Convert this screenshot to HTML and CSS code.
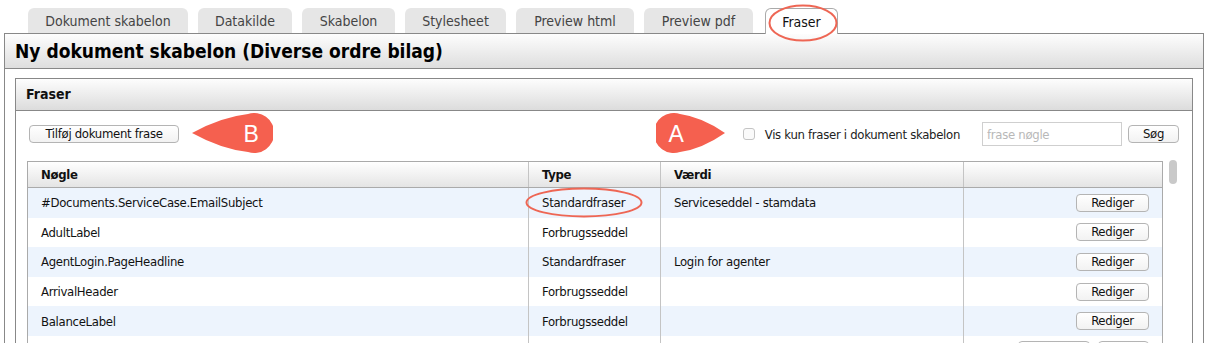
FILE: index.html
```html
<!DOCTYPE html>
<html lang="da">
<head>
<meta charset="utf-8">
<title>Fraser</title>
<link rel="stylesheet" href="styles.css">
</head>
<body>
<div class="page">
  <div class="tabs">
    <div class="tab">Dokument skabelon</div>
    <div class="tab">Datakilde</div>
    <div class="tab">Skabelon</div>
    <div class="tab">Stylesheet</div>
    <div class="tab">Preview html</div>
    <div class="tab">Preview pdf</div>
    <div class="tab active">Fraser</div>
  </div>
  <div class="panel">
    <div class="panel-head">Ny dokument skabelon (Diverse ordre bilag)</div>
    <div class="inner">
      <div class="inner-head">Fraser</div>
      <div class="toolbar">
        <button class="btn add">Tilføj dokument frase</button>
        <div class="spacer"></div>
        <label class="check"><span class="box"></span>Vis kun fraser i dokument skabelon</label>
        <input class="search" type="text" placeholder="frase nøgle">
        <button class="btn sog">Søg</button>
      </div>
      <div class="grid-wrap">
        <div class="table">
          <div class="row head">
            <div class="cell">Nøgle</div>
            <div class="cell">Type</div>
            <div class="cell">Værdi</div>
            <div class="cell"></div>
          </div>
          <div class="row alt">
            <div class="cell">#Documents.ServiceCase.EmailSubject</div>
            <div class="cell">Standardfraser</div>
            <div class="cell">Serviceseddel - stamdata</div>
            <div class="cell act"><button class="btn edit">Rediger</button></div>
          </div>
          <div class="row">
            <div class="cell">AdultLabel</div>
            <div class="cell">Forbrugsseddel</div>
            <div class="cell"></div>
            <div class="cell act"><button class="btn edit">Rediger</button></div>
          </div>
          <div class="row alt">
            <div class="cell">AgentLogin.PageHeadline</div>
            <div class="cell">Standardfraser</div>
            <div class="cell">Login for agenter</div>
            <div class="cell act"><button class="btn edit">Rediger</button></div>
          </div>
          <div class="row">
            <div class="cell">ArrivalHeader</div>
            <div class="cell">Forbrugsseddel</div>
            <div class="cell"></div>
            <div class="cell act"><button class="btn edit">Rediger</button></div>
          </div>
          <div class="row alt">
            <div class="cell">BalanceLabel</div>
            <div class="cell">Forbrugsseddel</div>
            <div class="cell"></div>
            <div class="cell act"><button class="btn edit">Rediger</button></div>
          </div>
          <div class="row">
            <div class="cell"></div>
            <div class="cell"></div>
            <div class="cell"></div>
            <div class="cell act"><span class="btn stub wide"></span><span class="btn stub small"></span></div>
          </div>
        </div>
        <div class="scroll"><div class="thumb"></div></div>
      </div>
    </div>
  </div>

  <svg class="callout callout-b" width="82" height="42" viewBox="0 0 82 42">
    <path d="M1 20 Q30 4 57 1 A20 20 0 1 1 57 39 Q30 36 1 20 Z" fill="#f5604f"/>
    <text x="60" y="28.5" text-anchor="middle">B</text>
  </svg>
  <svg class="callout callout-a" width="70" height="42" viewBox="0 0 70 42">
    <path d="M69 20 Q46 4 24 1 A20 20 0 1 0 24 39 Q46 36 69 20 Z" fill="#f5604f"/>
    <text x="20" y="28.5" text-anchor="middle">A</text>
  </svg>
  <svg class="ring ring-tab" width="70" height="38" viewBox="0 0 70 38">
    <ellipse cx="35" cy="19" rx="33.5" ry="17.5" fill="none" stroke="#ee6654" stroke-width="2"/>
  </svg>
  <svg class="ring ring-type" width="118" height="31" viewBox="0 0 118 31">
    <ellipse cx="59" cy="15.5" rx="57.5" ry="14" fill="none" stroke="#ee6654" stroke-width="2"/>
  </svg>
</div>
</body>
</html>
```

FILE: styles.css
```css
* { box-sizing: border-box; }
html, body { margin: 0; padding: 0; background: #fff; }
body {
  font-family: "DejaVu Sans Condensed", "DejaVu Sans", sans-serif;
  font-stretch: condensed;
  color: #111;
  font-size: 13px;
  letter-spacing: -0.3px;
  overflow: hidden;
}
.page { position: relative; height: 343px; overflow: hidden; }

.tabs {
  display: flex;
  gap: 10px;
  padding: 8px 0 0 28px;
  height: 33px;
}
.tab {
  height: 25px;
  line-height: 26px;
  padding: 0;
  background: #e6e6e6;
  border-radius: 6px 6px 0 0;
  color: #444;
  font-size: 14px;
  letter-spacing: 0;
  text-align: center;
}
.tab:nth-child(1) { width: 160px; }
.tab:nth-child(2) { width: 94px; }
.tab:nth-child(3) { width: 93px; }
.tab:nth-child(4) { width: 101px; }
.tab:nth-child(5) { width: 118px; }
.tab:nth-child(6) { width: 109px; }
.tab.active {
  width: 73px;
  margin-left: 2px;
  height: 26px;
  background: #fff;
  border: 1px solid #aaa;
  border-bottom: none;
  color: #111;
  position: relative;
  z-index: 2;
}

.panel {
  margin: 0 7px 0 4px;
  border: 1px solid #888;
  height: 400px;
}
.panel-head {
  height: 35px;
  border-bottom: 1px solid #888;
  background: linear-gradient(#fdfdfd, #dedede);
  font-weight: bold;
  font-size: 19px;
  letter-spacing: 0;
  line-height: 34px;
  padding-left: 10px;
  color: #000;
}
.inner {
  margin: 9px 10px 0 10px;
  border: 1px solid #888;
  height: 300px;
}
.inner-head {
  height: 32px;
  border-bottom: 1px solid #888;
  background: linear-gradient(#fdfdfd, #dcdcdc);
  font-weight: bold;
  font-size: 14px;
  letter-spacing: 0;
  line-height: 31px;
  padding-left: 10px;
  color: #111;
}
.toolbar {
  display: flex;
  align-items: center;
  height: 46px;
  padding: 0 13px 0 12px;
}
.spacer { flex: 1; }
.btn {
  display: inline-block;
  font-family: inherit;
  font-stretch: condensed;
  font-size: 13px;
  letter-spacing: -0.3px;
  color: #111;
  background: linear-gradient(#ffffff, #f2f2f2);
  border: 1px solid #b4b4b4;
  border-radius: 4px;
  height: 18px;
  padding: 0;
  line-height: 16px;
}
.btn.add { width: 150px; margin-left: 1px; }
.check {
  display: flex;
  align-items: center;
  gap: 10px;
  font-size: 13px;
  color: #222;
}
.box {
  width: 12px;
  height: 12px;
  border: 1px solid #c4c4c4;
  border-radius: 3px;
  background: #fafafa;
}
.search {
  margin-left: 22px;
  width: 140px;
  height: 24px;
  border: 1px solid #cfcfcf;
  font-family: inherit;
  font-stretch: condensed;
  font-size: 13px;
  letter-spacing: -0.3px;
  padding: 0 4px;
  outline: none;
}
.search::placeholder { color: #b8b8b8; }
.btn.sog { width: 51px; margin-left: 6px; }

.grid-wrap {
  display: flex;
  padding: 4px 0 0 11px;
}
.table {
  width: 1136px;
  border: 1px solid #aaa;
  border-bottom: none;
}
.row {
  display: grid;
  grid-template-columns: 500px 132px 303px 1fr;
  height: 29.6px;
}
.row.alt { background: #edf4fd; }
.row.head {
  height: 26px;
  border-bottom: 1px solid #aaa;
  background: linear-gradient(#ffffff, #e4e4e4);
  font-weight: bold;
}
.cell {
  display: flex;
  align-items: center;
  padding-left: 13px;
  border-left: 1px solid #c4c4c4;
  white-space: nowrap;
  overflow: hidden;
}
.cell:first-child { border-left: none; }
.cell.act { justify-content: flex-end; padding-right: 13px; gap: 8px; }
.row:last-child .cell.act { align-items: flex-start; padding-top: 5px; }
.btn.edit { width: 73px; }
.btn.wide { width: 72px; }
.btn.small { width: 51px; }

.scroll { width: 28px; padding: 0 0 0 6px; }
.thumb {
  width: 8px;
  height: 24px;
  margin-top: -1px;
  border-radius: 4px;
  background: #c9c9c9;
}

.callout { position: absolute; z-index: 5; }
.callout text {
  fill: #fff;
  font-family: "Liberation Sans", Arial, sans-serif;
  font-size: 23px;
}
.callout-b { left: 191px; top: 113px; }
.callout-a { left: 656px; top: 113px; }
.ring { position: absolute; z-index: 5; }
.ring-tab { left: 768px; top: 4px; }
.ring-type { left: 525px; top: 187px; }
```
